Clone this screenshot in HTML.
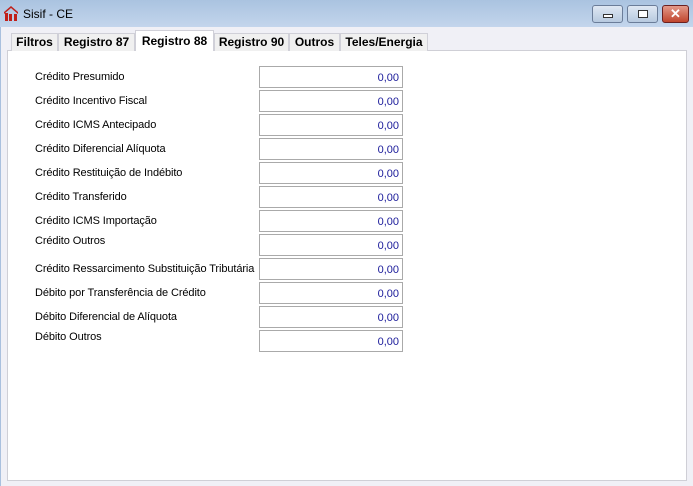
<!DOCTYPE html>
<html><head><style>
*{margin:0;padding:0;box-sizing:border-box}
body{width:693px;height:486px;background:#f0f0f6;font-family:"Liberation Sans",sans-serif;position:relative;overflow:hidden;font-size:11px}
.title{position:absolute;left:0;top:0;width:693px;height:27px;background:linear-gradient(#aac3e0,#c3d5ec);}
.title span{position:absolute;left:23px;top:7px;font-size:12px;color:#000}
.leftb{position:absolute;left:0;top:27px;width:1px;height:459px;background:#a9c0de}
.btn{position:absolute;top:5px;height:18px;border:1px solid #6b7d99;border-radius:3px;background:linear-gradient(#dfe8f3,#b7c9df)}
.panel{position:absolute;left:7px;top:50px;width:680px;height:431px;background:#fff;border:1px solid #cfcfd6}
.tab{position:absolute;top:33px;height:18px;background:#f0f0f0;border:1px solid #d0d0d8;border-bottom:none;font-weight:bold;font-size:12px;text-align:center;line-height:16px}
.tab.a{top:30px;height:21px;background:#fff;line-height:20px}
.lab{position:absolute;left:35px;font-size:11px;color:#000;letter-spacing:-0.1px}
.f{position:absolute;left:259px;width:144px;height:22px;border:1px solid #aaa;background:#fff;color:#1a1a9a;text-align:right;padding-right:3px;line-height:23px;font-size:11px}
</style></head><body>
<div class="title">
<svg style="position:absolute;left:4px;top:6px" width="14" height="15" viewBox="0 0 14 15"><path d="M0 6 L7 0 L14 6 L14 8 L7 2 L0 8Z" fill="#c0201a"/><rect x="1" y="7" width="3" height="8" fill="#c0201a"/><rect x="5" y="8" width="3" height="7" fill="#c0201a"/><rect x="10" y="8" width="3" height="7" fill="#c0201a"/></svg>
<span>Sisif - CE</span></div>
<div class="btn" style="left:592px;width:31px"><div style="position:absolute;left:10px;top:8px;width:10px;height:4px;border:1px solid #333;background:#fff"></div></div>
<div class="btn" style="left:627px;width:31px"><div style="position:absolute;left:10px;top:4px;width:10px;height:8px;border:1px solid #333;background:#fff"></div></div>
<div class="btn" style="left:662px;width:27px;background:linear-gradient(#e39a8a,#c0452d);border-color:#6b2020"><div style="position:absolute;left:7px;top:0;color:#fff;font-weight:bold;font-size:13px;line-height:16px">✕</div></div>
<div class="leftb"></div>
<div class="panel"></div>
<div class="tab" style="left:11px;width:47px">Filtros</div>
<div class="tab" style="left:58px;width:77px">Registro 87</div>
<div class="tab" style="left:289px;width:51px">Outros</div>
<div class="tab" style="left:340px;width:88px">Teles/Energia</div>
<div class="tab" style="left:214px;width:75px">Registro 90</div>
<div class="tab a" style="left:135px;width:79px">Registro 88</div>
<div class="lab" style="top:71px">Crédito Presumido</div>
<div class="lab" style="top:95px">Crédito Incentivo Fiscal</div>
<div class="lab" style="top:119px">Crédito ICMS Antecipado</div>
<div class="lab" style="top:143px">Crédito Diferencial Alíquota</div>
<div class="lab" style="top:167px">Crédito Restituição de Indébito</div>
<div class="lab" style="top:191px">Crédito Transferido</div>
<div class="lab" style="top:215px">Crédito ICMS Importação</div>
<div class="lab" style="top:235px">Crédito Outros</div>
<div class="lab" style="top:263px">Crédito Ressarcimento Substituição Tributária</div>
<div class="lab" style="top:287px">Débito por Transferência de Crédito</div>
<div class="lab" style="top:311px">Débito Diferencial de Alíquota</div>
<div class="lab" style="top:331px">Débito Outros</div>
<div class="f" style="top:66px">0,00</div>
<div class="f" style="top:90px">0,00</div>
<div class="f" style="top:114px">0,00</div>
<div class="f" style="top:138px">0,00</div>
<div class="f" style="top:162px">0,00</div>
<div class="f" style="top:186px">0,00</div>
<div class="f" style="top:210px">0,00</div>
<div class="f" style="top:234px">0,00</div>
<div class="f" style="top:258px">0,00</div>
<div class="f" style="top:282px">0,00</div>
<div class="f" style="top:306px">0,00</div>
<div class="f" style="top:330px">0,00</div>
</body></html>
